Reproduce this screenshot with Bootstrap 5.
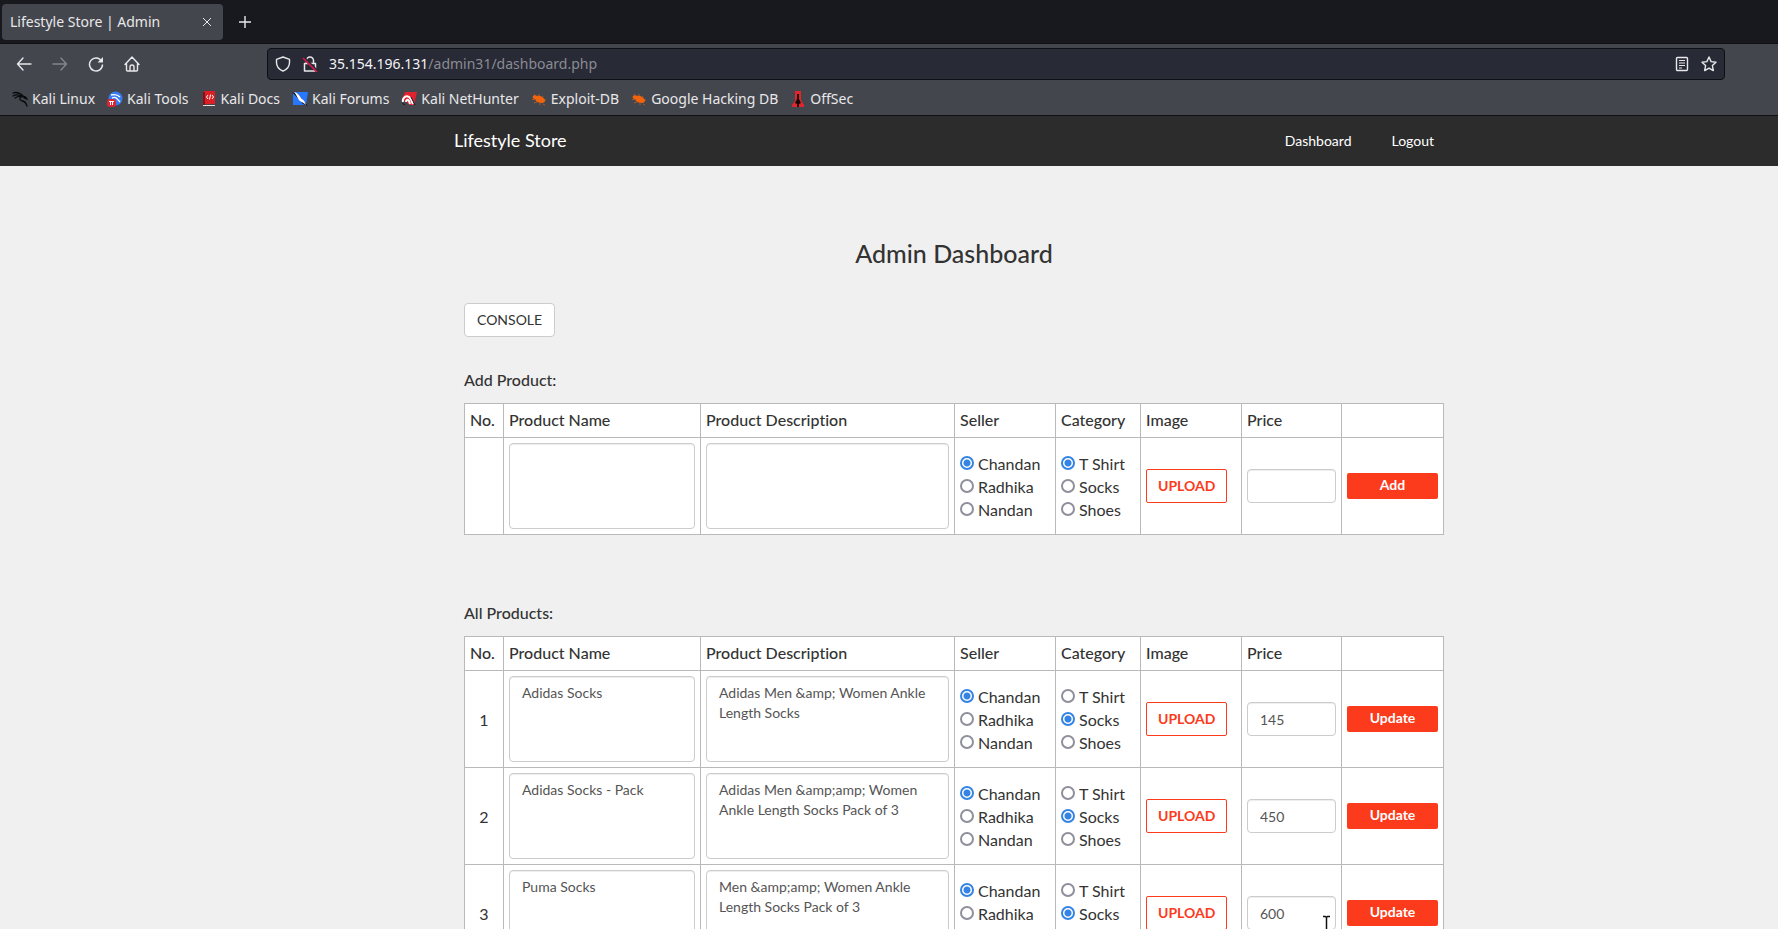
<!DOCTYPE html>
<html lang="en">
<head>
<meta charset="utf-8">
<meta name="viewport" content="width=device-width, initial-scale=1">
<title>Lifestyle Store | Admin</title>
<link rel="stylesheet" href="https://cdn.jsdelivr.net/npm/bootstrap@5.3.0/dist/css/bootstrap.min.css">
<style>
  body { background: #f0f0f0; color: #333; font: 16px/23px Lato, "Open Sans", sans-serif; font-variant-ligatures: none; }
  svg { display: block; flex: none; }

  /* Browser window */
  .chrome { font: 14px/22px "Noto Sans", sans-serif; color: #e8e8ea; }
  .chrome button { background: none; border: 0; padding: 0; color: inherit; }
  .chrome a { color: inherit; text-decoration: none; }
  .tab-strip { height: 44px; background: #18191f; border-bottom: 1px solid #0e0f13; padding: 4px 2px; }
  .page-tab { width: 221px; height: 36px; border-radius: 4px; background: #44464d; padding: 0 10px 0 8px; }
  .toolbar { background: #44464d; height: 40px; padding: 4px 16px; }
  .nav-buttons { width: 251px; gap: 20px; }
  .url-bar { flex: 1; height: 32px; margin-right: 37px; background: #282a36; border: 1px solid #0f1015; border-radius: 4px; padding: 0 7px; }
  .url-text { color: #8b8c93; white-space: nowrap; }
  .url-text b { color: #f4f4f6; font-weight: 400; }
  .bookmarks { background: #44464d; height: 32px; padding: 0 12px 2px; gap: 12px; border-bottom: 1px solid #0f1015; white-space: nowrap; }
  .bookmarks a { gap: 4px; }

  /* Store page */
  .site-nav { background: #2c2c2c; height: 50px; padding-bottom: 2px; }
  .site-nav a { color: #fff; text-decoration: none; font-size: 14px; }
  .site-nav .site-name { font-size: 18px; }
  .page-offset { padding-left: 130px; }
  .page-wrap { width: 100%; max-width: 1000px; margin: 0 auto; }
  .page-body { padding: 0 10px; }
  .dash-title { font-size: 25px; line-height: 34px; font-weight: 500; margin: 70px 0 33px; text-align: center; }
  .section-title { font-size: 16px; line-height: 24px; font-weight: 500; margin: 0 0 11px; }
  .section-add { margin-top: 31px; }
  .section-all { margin-top: 66px; }
  .btn-console, .btn-upload { height: 34px; font-size: 14px; line-height: 20px; padding: 6px 12px; background: #fff; }
  .btn-console { border: 1px solid #ccc; border-radius: 4px; color: #333; }
  .btn-upload { border: 1px solid #fc3a1c; border-radius: 2px; color: #fc3a1c; font-weight: 700; padding: 6px 11px; width: 81px; }
  .btn-save { width: 100%; height: 26px; border: 0; border-radius: 2px; background: #fc3a1c; color: #fff; font-size: 14px; line-height: 20px; font-weight: 700; padding: 2px 3px 4px; }
  .product-table { width: 100%; table-layout: fixed; border-collapse: collapse; background: #fff; }
  .product-table th, .product-table td { border: 1px solid #b9b9b9; padding: 5px; vertical-align: middle; }
  .product-table th { font-weight: 500; padding: 4px 5px 6px; }
  .product-table .num { text-align: center; }
  .product-table .field { display: block; width: 100%; border: 1px solid #ccc; border-radius: 4px; box-shadow: inset 0 1px 1px rgba(0,0,0,.075); color: #555; font-size: 14px; line-height: 20px; padding: 6px 12px; background: #fff; }
  .product-table textarea { height: 86px; resize: none; overflow: hidden; }
  .product-table input.field { height: 34px; }
  .choice { display: flex; align-items: center; gap: 4px; white-space: nowrap; }
  .choice input { appearance: none; width: 14px; height: 14px; margin: 0; flex: none; border: 2px solid #8f8f9d; border-radius: 50%; background: #fff; }
  .choice input:checked { border-color: #3584e4; background: radial-gradient(circle, #3584e4 3px, #fff 4px); }
  .pointer { position: absolute; right: 10px; top: 50px; }
</style>
</head>
<body>
<svg width="0" height="0" class="position-absolute" aria-hidden="true">
  <symbol id="bug" viewBox="0 0 16 16"><path d="M5 6 3 3M8 6V3M4 8.500H1M6 11l-3 1M9 12v2M12 13l2 1M12 9h3M11 7l1-2" stroke="#a8562f"/><path fill="#f2640c" d="M2 5c1-1 3-1 4 0 3-1 6 1 8 4 0 2-1 3-3 3-3 0-6-1-7-4C2 8 1 6 2 5z"/></symbol>
</svg>
<div class="vh-100 d-flex flex-column overflow-hidden">

  <header class="chrome flex-shrink-0">
    <div class="tab-strip d-flex align-items-center">
      <div class="page-tab d-flex align-items-center justify-content-between">
        <span>Lifestyle Store | Admin</span>
        <button type="button" aria-label="Close tab"><svg width="12" height="12" stroke="currentColor"><path d="M2 2l8 8M10 2l-8 8"/></svg></button>
      </div>
      <button type="button" class="ms-3" aria-label="New tab"><svg width="12" height="12" stroke="currentColor" stroke-width="1.4"><path d="M6 0v12M0 6h12"/></svg></button>
    </div>

    <div class="toolbar d-flex align-items-center">
      <div class="nav-buttons d-flex align-items-center">
        <button type="button" aria-label="Back"><svg width="16" height="16" fill="none" stroke="currentColor" stroke-width="1.4" stroke-linecap="round" stroke-linejoin="round"><path d="M15 8H1.500M7 2 1.500 8 7 14"/></svg></button>
        <button type="button" aria-label="Forward" disabled><svg width="16" height="16" fill="none" stroke="#85868c" stroke-width="1.4" stroke-linecap="round" stroke-linejoin="round"><path d="M1 8h13.500M9 2l5.500 6L9 14"/></svg></button>
        <button type="button" aria-label="Reload"><svg width="16" height="16" fill="none" stroke="currentColor" stroke-width="1.500"><path d="M13.500 5A6.500 6.500 0 1 0 14.500 8.500"/><path d="M15 1v5.500H9.500z" fill="currentColor" stroke="none"/></svg></button>
        <button type="button" aria-label="Home"><svg width="16" height="16" fill="none" stroke="currentColor" stroke-width="1.400" stroke-linejoin="round" stroke-linecap="round"><path d="M1 8.500 8 1l7 7.500M2.500 7.500V14a1 1 0 0 0 1 1h9a1 1 0 0 0 1-1V7.500M6 15v-4a2 2 0 0 1 4 0v4"/></svg></button>
      </div>
      <div class="url-bar d-flex align-items-center">
        <svg width="16" height="16" fill="none" stroke="currentColor" stroke-width="1.400" stroke-linejoin="round"><path d="M8 1 14.500 3.300v3.200c0 3.500-2.500 7-6.500 8.700-4-1.700-6.500-5.200-6.500-8.700V3.300z"/></svg>
        <svg class="ms-2 me-1" width="26" height="16" fill="none" stroke-width="1.500"><path stroke="currentColor" stroke-linejoin="round" d="M7.500 7V4.500a3.500 3.500 0 0 1 7 0V7M5.500 7.500h11V15h-11z"/><path stroke="#282a36" stroke-width="3" d="M5 2l13 13"/><path stroke="#e5154c" stroke-width="1.500" d="M4 2l14 14"/></svg>
        <span class="url-text flex-grow-1"><b>35.154.196.131</b>/admin31/dashboard.php</span>
        <svg width="14" height="16" fill="none" stroke="currentColor" stroke-width="1.400"><rect x="1.500" y="1.500" width="11" height="13" rx="1"/><path d="M4 4.500h6M4 7h6M4 9.500h6M4 12h3" stroke-width="1"/></svg>
        <svg class="ms-2 ps-1" width="20" height="16" fill="none" stroke="currentColor" stroke-width="1.400" stroke-linejoin="round"><path d="M8 1l2.100 4.600 4.900.6-3.600 3.400.9 5L8 12.100l-4.300 2.500.9-5L1 6.200l4.900-.6z"/></svg>
      </div>
    </div>

    <nav class="bookmarks d-flex align-items-center" aria-label="Bookmarks">
      <a class="d-flex align-items-center" href="#"><svg width="16" height="16" fill="none" stroke="#08090b" stroke-linecap="round" stroke-width="1.300"><path d="M1 2c3-1 7 0 10 3M1 5c3-2 6-1 8 0M3 7c3-2 5-2 7-1M9 5c-2 3-1 4 1 5 3 0 4 2 5 5M10 6c2-1 4 0 5 2l-3-1"/></svg>Kali Linux</a>
      <a class="d-flex align-items-center" href="#"><svg width="16" height="16"><circle cx="8.500" cy="7.500" r="7" fill="#367bf0"/><path d="M4 4c4-1 7 0 9 2M5 7c4-2 5 1 8 4" fill="none" stroke="#fff" stroke-width="1.400"/><rect y="8" width="9" height="8" rx="3" fill="#d92535"/><path d="M2 10.500h5M3.500 10.500V14M5.500 10.500V14" stroke="#fff" /></svg>Kali Tools</a>
      <a class="d-flex align-items-center" href="#"><svg width="16" height="16"><path fill="#db1f26" d="M3 0h11v13H3z"/><path fill="#8c0f16" d="M2 1h2v13H2z"/><path fill="#f0d5d5" d="M2 14h12v1H2z"/><path d="M7 4 5.500 6 7 8M11 4l1.500 2L11 8M9.500 3.500l-1 5" fill="none" stroke="#fff"/></svg>Kali Docs</a>
      <a class="d-flex align-items-center" href="#"><svg width="16" height="16"><path fill="#2777ff" d="M1 1h15l-2 13H1z"/><path fill="#15181e" d="M0 1l5 1 11 13-5-2z"/><path fill="#fff" d="M2 1c5 1 6 5 8 7 2 1 3 3 4 6-3-3-5-3-6-4C6 9 5 4 2 1z"/></svg>Kali Forums</a>
      <a class="d-flex align-items-center" href="#"><svg width="16" height="16"><path fill="#e1232d" d="M4 1h12l-3 13H9L1 8z"/><path d="M2 11C1 7 5 4 8 6c2 1 2 3 4 7M5 11c0-2 2-3 3-1l1 3" fill="none" stroke="#fff" stroke-width="2"/><path d="M1 12l3 2M10 6l4 8" stroke="#171a20"/></svg>Kali NetHunter</a>
      <a class="d-flex align-items-center" href="#"><svg width="16" height="16"><use href="#bug"/></svg>Exploit-DB</a>
      <a class="d-flex align-items-center" href="#"><svg width="16" height="16"><use href="#bug"/></svg>Google Hacking DB</a>
      <a class="d-flex align-items-center" href="#"><svg width="16" height="16"><path fill="#e3252b" d="M5 0h6v9l3 5v2H2v-2l3-4z"/><path fill="#16070a" d="M7 3h2v5l2 4-2 1v3H7v-3l-2-1 2-4z"/></svg>OffSec</a>
    </nav>
  </header>

  <nav class="site-nav page-offset d-flex align-items-center flex-shrink-0">
    <div class="page-wrap d-flex align-items-center">
      <a class="site-name me-auto" href="#">Lifestyle Store</a>
      <a class="me-4 pe-3" href="#">Dashboard</a>
      <a class="me-3 pe-1" href="#">Logout</a>
    </div>
  </nav>

  <main class="page-offset flex-grow-1 overflow-hidden">
    <div class="page-wrap page-body">
      <h1 class="dash-title">Admin Dashboard</h1>
      <button type="button" class="btn-console d-block">CONSOLE</button>

      <section class="section-add">
        <h2 class="section-title">Add Product:</h2>
        <table class="product-table">
          <colgroup><col style="width:39px"><col style="width:197px"><col style="width:254px"><col style="width:101px"><col style="width:85px"><col style="width:101px"><col style="width:100px"><col style="width:102px"></colgroup>
          <thead><tr><th>No.</th><th>Product Name</th><th>Product Description</th><th>Seller</th><th>Category</th><th>Image</th><th>Price</th><th></th></tr></thead>
          <tbody>
            <tr>
              <td></td>
              <td><textarea class="field" aria-label="Product name"></textarea></td>
              <td><textarea class="field" aria-label="Product description"></textarea></td>
              <td><label class="choice"><input type="radio" name="s0" checked>Chandan</label><label class="choice"><input type="radio" name="s0">Radhika</label><label class="choice"><input type="radio" name="s0">Nandan</label></td>
              <td><label class="choice"><input type="radio" name="c0" checked>T Shirt</label><label class="choice"><input type="radio" name="c0">Socks</label><label class="choice"><input type="radio" name="c0">Shoes</label></td>
              <td><button type="button" class="btn-upload d-block">UPLOAD</button></td>
              <td><input type="text" class="field" aria-label="Price"></td>
              <td><button type="button" class="btn-save d-block">Add</button></td>
            </tr>
          </tbody>
        </table>
      </section>

      <section class="section-all">
        <h2 class="section-title">All Products:</h2>
        <table class="product-table">
          <colgroup><col style="width:39px"><col style="width:197px"><col style="width:254px"><col style="width:101px"><col style="width:85px"><col style="width:101px"><col style="width:100px"><col style="width:102px"></colgroup>
          <thead><tr><th>No.</th><th>Product Name</th><th>Product Description</th><th>Seller</th><th>Category</th><th>Image</th><th>Price</th><th></th></tr></thead>
          <tbody>
            <tr>
              <td class="num">1</td>
              <td><textarea class="field" aria-label="Product name">Adidas Socks</textarea></td>
              <td><textarea class="field" aria-label="Product description">Adidas Men &amp;amp; Women Ankle Length Socks</textarea></td>
              <td><label class="choice"><input type="radio" name="s1" checked>Chandan</label><label class="choice"><input type="radio" name="s1">Radhika</label><label class="choice"><input type="radio" name="s1">Nandan</label></td>
              <td><label class="choice"><input type="radio" name="c1">T Shirt</label><label class="choice"><input type="radio" name="c1" checked>Socks</label><label class="choice"><input type="radio" name="c1">Shoes</label></td>
              <td><button type="button" class="btn-upload d-block">UPLOAD</button></td>
              <td><input type="text" class="field" aria-label="Price" value="145"></td>
              <td><button type="button" class="btn-save d-block">Update</button></td>
            </tr>
            <tr>
              <td class="num">2</td>
              <td><textarea class="field" aria-label="Product name">Adidas Socks - Pack</textarea></td>
              <td><textarea class="field" aria-label="Product description">Adidas Men &amp;amp;amp; Women Ankle Length Socks Pack of 3</textarea></td>
              <td><label class="choice"><input type="radio" name="s2" checked>Chandan</label><label class="choice"><input type="radio" name="s2">Radhika</label><label class="choice"><input type="radio" name="s2">Nandan</label></td>
              <td><label class="choice"><input type="radio" name="c2">T Shirt</label><label class="choice"><input type="radio" name="c2" checked>Socks</label><label class="choice"><input type="radio" name="c2">Shoes</label></td>
              <td><button type="button" class="btn-upload d-block">UPLOAD</button></td>
              <td><input type="text" class="field" aria-label="Price" value="450"></td>
              <td><button type="button" class="btn-save d-block">Update</button></td>
            </tr>
            <tr>
              <td class="num">3</td>
              <td><textarea class="field" aria-label="Product name">Puma Socks</textarea></td>
              <td><textarea class="field" aria-label="Product description">Men &amp;amp;amp; Women Ankle Length Socks Pack of 3</textarea></td>
              <td><label class="choice"><input type="radio" name="s3" checked>Chandan</label><label class="choice"><input type="radio" name="s3">Radhika</label><label class="choice"><input type="radio" name="s3">Nandan</label></td>
              <td><label class="choice"><input type="radio" name="c3">T Shirt</label><label class="choice"><input type="radio" name="c3" checked>Socks</label><label class="choice"><input type="radio" name="c3">Shoes</label></td>
              <td><button type="button" class="btn-upload d-block">UPLOAD</button></td>
              <td class="position-relative"><input type="text" class="field" aria-label="Price" value="600"><svg class="pointer" width="9" height="18" fill="none" aria-hidden="true"><path stroke="#fff" stroke-width="3" d="M1 1.500h7M4.500 1v16M1 16.500h7"/><path stroke="#111" stroke-width="1.500" d="M1 1.500h2.500l1 1 1-1H8M4.500 2v14"/></svg></td>
              <td><button type="button" class="btn-save d-block">Update</button></td>
            </tr>
          </tbody>
        </table>
      </section>
    </div>
  </main>
</div>
<script src="https://cdn.jsdelivr.net/npm/bootstrap@5.3.0/dist/js/bootstrap.bundle.min.js"></script>
</body>
</html>
